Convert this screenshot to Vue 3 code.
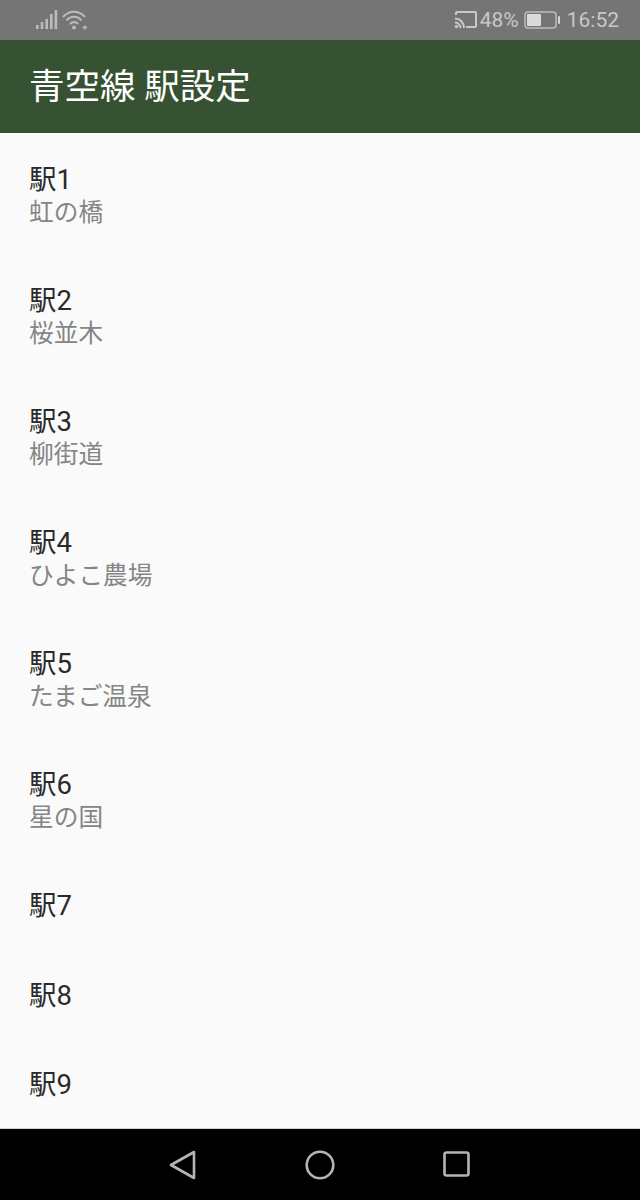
<script setup>
const stations = [
  { id: 1, title: "駅1", name: "虹の橋" },
  { id: 2, title: "駅2", name: "桜並木" },
  { id: 3, title: "駅3", name: "柳街道" },
  { id: 4, title: "駅4", name: "ひよこ農場" },
  { id: 5, title: "駅5", name: "たまご温泉" },
  { id: 6, title: "駅6", name: "星の国" },
  { id: 7, title: "駅7" },
  { id: 8, title: "駅8" },
  { id: 9, title: "駅9" },
];
</script>

<template>
  <div class="screen">
    <div class="status-bar">
      <div class="status-left">
        <svg width="22" height="22" viewBox="0 0 22 22">
          <rect x="0" y="16" width="2.6" height="4" fill="#bcbcbc" />
          <rect x="4.700" y="13" width="2.600" height="7" fill="#bcbcbc" />
          <rect x="9.400" y="10" width="2.600" height="10" fill="#bcbcbc" />
          <rect x="14" y="5" width="2.600" height="15" fill="#bcbcbc" />
          <rect x="18.600" y="1" width="2.600" height="19" fill="#bcbcbc" />
        </svg>
        <svg width="26" height="22" viewBox="0 0 26 22" fill="none" stroke="#bcbcbc" stroke-width="2">
          <path d="M1 8 C7 1 17 1 23 8" />
          <path d="M4.500 11.500 C8.500 6.500 15.500 6.500 19.500 11.500" />
          <path d="M8 15 C10.500 12.300 13.500 12.300 16 15" />
          <circle cx="12" cy="18.500" r="1.900" fill="#bcbcbc" stroke="none" />
          <path d="M20.500 18.500 H25 M22.800 16.300 V20.700" stroke-width="1.300" />
        </svg>
      </div>
      <div class="status-right">
        <svg width="23" height="20" viewBox="0 0 23 20" fill="none" stroke="#c8c8c8" stroke-width="2">
          <path d="M2 5 V3 Q2 2 3 2 H21 Q22 2 22 3 V16 Q22 17 21 17 H12" />
          <path d="M1 8.500 C6 8.500 10 12.500 10 18" />
          <path d="M1 12.500 C4 12.500 6.500 15 6.500 18" />
          <circle cx="2.500" cy="16.500" r="1.700" fill="#c8c8c8" stroke="none" />
        </svg>
        <span class="battery-text">48%</span>
        <svg width="36" height="20" viewBox="0 0 36 20" fill="none">
          <rect x="1" y="2" width="31" height="16" rx="3" stroke="#bdbdbd" stroke-width="1.500" />
          <rect x="3" y="4" width="14" height="12" rx="1" fill="#dadada" />
          <rect x="34" y="6" width="2" height="8" rx="1" fill="#d4d4d4" />
        </svg>
        <span class="clock">16:52</span>
      </div>
    </div>

    <header class="app-bar">青空線 駅設定</header>

    <main class="list">
      <div class="list-item" :class="{ 'has-name': item.name }" v-for="item in stations" :key="item.id">
        <div class="item-title">{{ item.title }}</div>
        <div class="item-name" v-if="item.name">{{ item.name }}</div>
      </div>
    </main>

    <nav class="nav-bar">
      <svg width="28" height="30" viewBox="0 0 28 30" fill="none" stroke="#b4b4b4" stroke-width="2.600" stroke-linejoin="round">
        <path d="M25 2 V28 L2 15 Z" />
      </svg>
      <svg width="30" height="30" viewBox="0 0 30 30" fill="none" stroke="#b4b4b4" stroke-width="2.600">
        <circle cx="15" cy="15" r="13.300" />
      </svg>
      <svg width="28" height="28" viewBox="0 0 28 28" fill="none" stroke="#b4b4b4" stroke-width="2.600" stroke-linejoin="round">
        <rect x="1.500" y="1.500" width="24" height="23" rx="2" />
      </svg>
    </nav>
  </div>
</template>

<style>
body {
  margin: 0;
}
</style>

<style scoped>
.screen {
  width: 640px;
  height: 1200px;
  display: flex;
  flex-direction: column;
  overflow: hidden;
  background: #fafafa;
  font-family: "Roboto", "Noto Sans CJK JP", sans-serif;
}
.status-bar {
  height: 40px;
  background: #757575;
  display: flex;
  align-items: center;
  justify-content: space-between;
  padding: 0 21px 0 36px;
  flex-shrink: 0;
  color: #c8c8c8;
}
.status-left {
  display: flex;
  align-items: center;
  gap: 4px;
}
.status-right {
  display: flex;
  align-items: center;
  font-size: 21px;
}
.battery-text {
  margin: 0 5px 0 3px;
}
.clock {
  margin-left: 7px;
}
.app-bar {
  height: 93px;
  flex-shrink: 0;
  box-sizing: border-box;
  background: #375232;
  color: #ffffff;
  font-size: 35.500px;
  line-height: 95px;
  padding-left: 29px;
}
.list {
  flex: 1;
  overflow: hidden;
}
.list-item {
  box-sizing: border-box;
  height: 89.500px;
  padding: 5px 0 0 29px;
  display: flex;
  flex-direction: column;
  justify-content: center;
}
.list-item.has-name {
  height: 121px;
  padding-top: 4px;
}
.item-title {
  font-size: 27.500px;
  line-height: 34px;
  color: #2a2a2a;
}
.item-name {
  font-size: 24.700px;
  line-height: 32px;
  color: #858585;
}
.nav-bar {
  height: 72px;
  flex-shrink: 0;
  background: #000000;
  border-top: 1px solid #d0d0d0;
  box-sizing: border-box;
  display: flex;
  align-items: center;
  justify-content: center;
  gap: 108px;
}
</style>
